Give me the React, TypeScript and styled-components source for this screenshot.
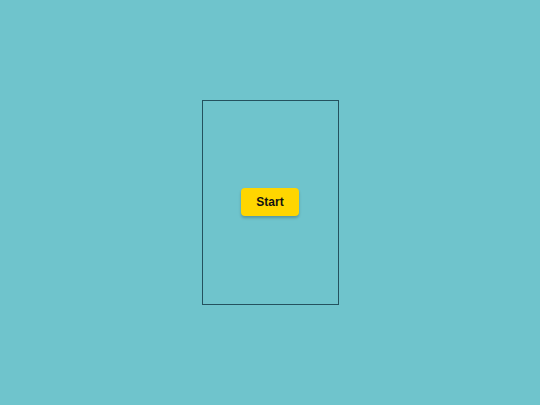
import React from "react";
import styled, { createGlobalStyle } from "styled-components";

const Global = createGlobalStyle`
  html, body { margin: 0; padding: 0; }
  body {
    background: #6fc4cc;
    font-family: "Liberation Sans", Arial, sans-serif;
  }
`;

const Stage = styled.div`
  box-sizing: border-box;
  width: 540px;
  height: 405px;
  padding: 100px 0 0 202px;
`;

const Frame = styled.div`
  box-sizing: border-box;
  width: 137px;
  height: 205px;
  border: 1px solid #24525e;
  padding: 87px 0 0 38px;
`;

const StartButton = styled.button`
  display: block;
  width: 58px;
  height: 28px;
  border: none;
  border-radius: 4px;
  background: #ffd600;
  color: #111;
  font-family: "Liberation Sans", Arial, sans-serif;
  font-weight: 700;
  font-size: 12px;
  box-shadow: 0 2px 3px rgba(0, 0, 0, 0.22);
  cursor: pointer;
  padding: 0;
`;

export default function App() {
  return (
    <>
      <Global />
      <Stage>
        <Frame>
          <StartButton>Start</StartButton>
        </Frame>
      </Stage>
    </>
  );
}
